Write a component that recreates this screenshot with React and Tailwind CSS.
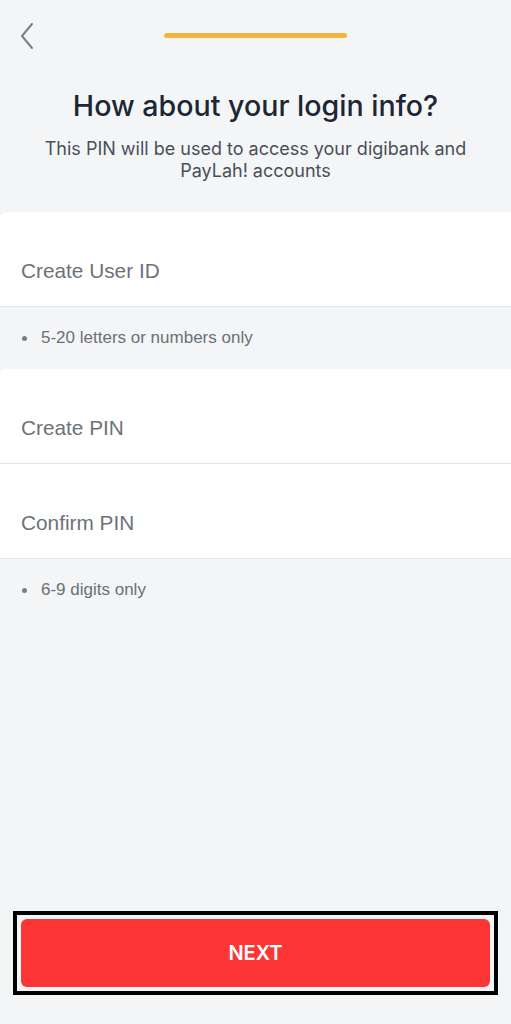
import React from 'react'

function Field({ label, rounded }) {
    return (
        <div className={`h-[95px] bg-white border-b border-[#e3e5e8] flex items-end pl-[21px] pb-[23px] ${rounded ? 'rounded-tl-[6px]' : ''}`}>
            <span className="text-[20.8px] leading-[24px] text-[#6d7277]" style={{ fontFamily: '"Liberation Sans", Arial, sans-serif' }}>{label}</span>
        </div>
    )
}

function Hint({ text }) {
    return (
        <div className="h-[62px] flex items-center pl-[22px] text-[17px] text-[#6b7075]" style={{ fontFamily: '"Liberation Sans", Arial, sans-serif' }}>
            <span className="w-[5px] h-[5px] rounded-full bg-[#7a7f84] mr-[14px]"></span>
            <span>{text}</span>
        </div>
    )
}

export default function App() {
    return (
        <div className="w-[511px] h-[1024px] bg-[#f4f5f7] flex flex-col font-['Inter',sans-serif]">
            <div className="relative h-[72px] flex items-center justify-center">
                <svg className="absolute left-[18px] top-[22px]" width="18" height="28" viewBox="0 0 18 28" fill="none">
                    <path d="M14 2 L4 14 L14 26" stroke="#7b7f84" strokeWidth="2" strokeLinecap="round" strokeLinejoin="round" />
                </svg>
                <div className="w-[183px] h-[5px] rounded-full bg-[#f2b43d] -mt-[1px]"></div>
            </div>

            <h1 className="mt-[18px] text-center text-[28.6px] leading-[32px] font-medium text-[#1c2733]">
                How about your login info?
            </h1>
            <p className="mt-[16px] text-center text-[18px] leading-[22px] text-[#4a4f57] px-[30px]">
                This PIN will be used to access your digibank and PayLah! accounts
            </p>

            <div className="mt-[30px]">
                <Field label="Create User ID" rounded />
                <Hint text="5-20 letters or numbers only" />
                <Field label="Create PIN" rounded />
                <Field label="Confirm PIN" />
                <Hint text="6-9 digits only" />
            </div>

            <div className="flex-1"></div>

            <div className="mx-[13px] mb-[29px] border-[4px] border-black p-[4px]">
                <button className="w-full h-[68px] rounded-[6px] bg-[#fd3535] text-white text-[20px] font-semibold">
                    NEXT
                </button>
            </div>
        </div>
    )
}
